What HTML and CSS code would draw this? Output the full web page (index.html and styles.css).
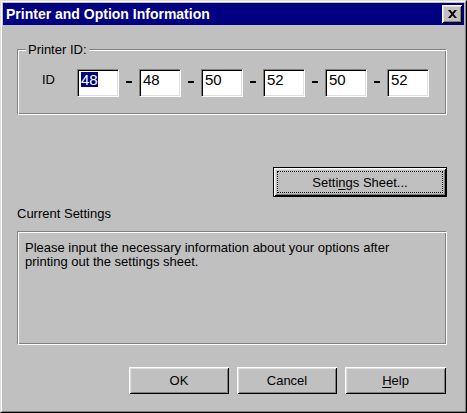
FILE: index.html
```html
<!DOCTYPE html>
<html>
<head>
<meta charset="utf-8">
<link rel="stylesheet" href="styles.css">
</head>
<body>
<div class="window">
  <div class="window-inner">
    <div class="titlebar">
      <span class="title">Printer and Option Information</span>
      <button class="close-btn" aria-label="Close">
        <svg width="9" height="8" viewBox="0 0 9 8"><path d="M0 0h2.4l2.1 2.6L6.6 0H9L5.7 4 9 8H6.6L4.5 5.4 2.4 8H0l3.3-4z" fill="#000"/></svg>
      </button>
    </div>
    <div class="content">
      <div class="groupbox">
        <span class="legend">Printer ID:</span>
        <div class="id-row">
          <span class="id-label">ID</span>
          <div class="field"><span class="sel">48</span></div>
          <div class="dash"><span></span></div>
          <div class="field"><span>48</span></div>
          <div class="dash"><span></span></div>
          <div class="field"><span>50</span></div>
          <div class="dash"><span></span></div>
          <div class="field"><span>52</span></div>
          <div class="dash"><span></span></div>
          <div class="field"><span>50</span></div>
          <div class="dash"><span></span></div>
          <div class="field"><span>52</span></div>
        </div>
      </div>
      <div class="sheet-row">
        <button class="btn btn-default">Setti<u>n</u>gs Sheet...</button>
      </div>
      <div class="section-label">Current Settings</div>
      <div class="info-box">Please input the necessary information about your options after<br>printing out the settings sheet.</div>
      <div class="button-row">
        <button class="btn btn-std">OK</button>
        <button class="btn btn-std">Cancel</button>
        <button class="btn btn-std btn-help"><u>H</u>elp</button>
      </div>
    </div>
  </div>
</div>
</body>
</html>
```
FILE: styles.css
```css
html, body {
  margin: 0;
  padding: 0;
  background: #c0c0c0;
}
body {
  font-family: "Liberation Sans", Arial, sans-serif;
  font-size: 13px;
  line-height: 15px;
  color: #000;
}
.window {
  width: 467px;
  height: 413px;
  box-sizing: border-box;
  border: 1px solid;
  border-color: #dfdfdf #000 #000 #dfdfdf;
  background: #c0c0c0;
}
.window-inner {
  height: 100%;
  box-sizing: border-box;
  border: 1px solid;
  border-color: #fff #808080 #808080 #fff;
  padding: 1px;
}
.titlebar {
  height: 22px;
  background: #000080;
  display: flex;
  align-items: center;
  justify-content: space-between;
  padding: 0 2px 0 3px;
}
.title {
  color: #fff;
  font-weight: bold;
  font-size: 14px;
  line-height: 16px;
  white-space: nowrap;
}
.close-btn {
  width: 20px;
  height: 18px;
  padding: 0;
  margin: 0;
  border: none;
  background: #c0c0c0;
  box-shadow: inset 1px 1px #fff, inset -1px -1px #000, inset 2px 2px #dfdfdf, inset -2px -2px #808080;
  display: flex;
  align-items: center;
  justify-content: center;
}
.close-btn svg {
  display: block;
  margin-left: 1px;
  margin-top: -1px;
}
.content {
  padding-left: 14px;
  width: 430px;
}
.groupbox {
  position: relative;
  margin-top: 24px;
  height: 66px;
  box-sizing: border-box;
  border: 1px solid;
  border-color: #808080 #fff #fff #808080;
  box-shadow: inset 1px 1px #fff, inset -1px -1px #808080;
  padding: 19px 0 0 24px;
}
.legend {
  position: absolute;
  left: 8px;
  top: -8px;
  padding: 0 2px;
  background: #c0c0c0;
}
.id-row {
  display: flex;
  align-items: flex-start;
}
.id-label {
  width: 35px;
  margin-top: 3px;
}
.field {
  width: 42px;
  height: 28px;
  box-sizing: border-box;
  background: #fff;
  border: 1px solid;
  border-color: #808080 #fff #fff #808080;
  box-shadow: inset 1px 1px #000, inset -1px -1px #dfdfdf;
  padding: 2px 0 0 3px;
  font-size: 15px;
  line-height: 15px;
}
.field span {
  display: inline-block;
}
.field .sel {
  background: #000080;
  color: #fff;
}
.dash {
  width: 20px;
  display: flex;
  justify-content: center;
  padding-top: 12px;
}
.dash span {
  width: 6px;
  height: 2px;
  background: #000;
}
.sheet-row {
  display: flex;
  justify-content: flex-end;
  margin-top: 52px;
}
.btn {
  font-family: "Liberation Sans", Arial, sans-serif;
  font-size: 13px;
  line-height: 15px;
  color: #000;
  background: #c0c0c0;
  margin: 0;
  padding: 0;
  box-sizing: border-box;
  position: relative;
}
.btn u {
  text-decoration: underline;
  text-underline-offset: 2px;
}
.btn-default {
  width: 174px;
  height: 30px;
  border: 1px solid #000;
  box-shadow: inset 1px 1px #fff, inset -1px -1px #000, inset 2px 2px #dfdfdf, inset -2px -2px #808080;
}
.btn-default::after {
  content: "";
  position: absolute;
  left: 3px;
  top: 3px;
  right: 3px;
  bottom: 3px;
  border: 1px dotted #000;
}
.section-label {
  margin-top: 9px;
  height: 15px;
}
.info-box {
  margin-top: 10px;
  height: 114px;
  box-sizing: border-box;
  border: 1px solid;
  border-color: #808080 #fff #fff #808080;
  box-shadow: inset 1px 1px #fff, inset -1px -1px #808080;
  padding: 9px 7px 0 7px;
  line-height: 14px;
}
.button-row {
  display: flex;
  justify-content: flex-end;
  gap: 8px;
  margin-top: 22px;
  padding-right: 1px;
}
.btn-std {
  width: 100px;
  height: 27px;
  border: none;
  box-shadow: inset 1px 1px #fff, inset -1px -1px #000, inset 2px 2px #dfdfdf, inset -2px -2px #808080;
}
.btn-help {
  width: 101px;
}
```
